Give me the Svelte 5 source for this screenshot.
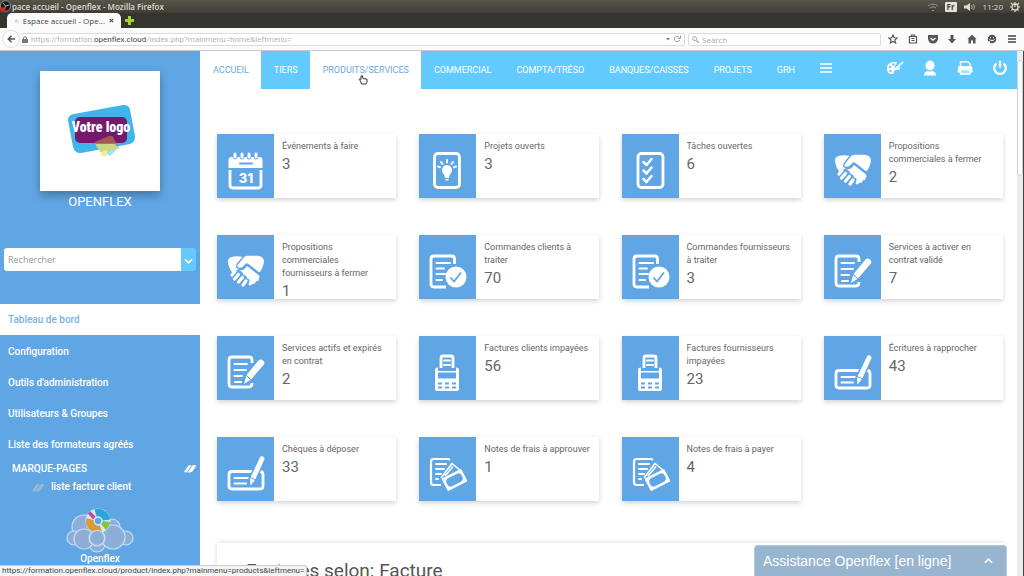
<script lang="ts">
  const navItems = [
    { label: 'ACCUEIL', state: 'current' },
    { label: 'TIERS', state: '' },
    { label: 'PRODUITS/SERVICES', state: 'hovered' },
    { label: 'COMMERCIAL', state: '' },
    { label: 'COMPTA/TRÉSO', state: '' },
    { label: 'BANQUES/CAISSES', state: '' },
    { label: 'PROJETS', state: '' },
    { label: 'GRH', state: '' },
  ];

  const menu = [
    'Tableau de bord',
    'Configuration',
    "Outils d'administration",
    'Utilisateurs & Groupes',
    'Liste des formateurs agréés',
  ];

  const cards = [
    { title: 'Événements à faire', value: 3, icon: 'calendar' },
    { title: 'Projets ouverts', value: 3, icon: 'idea' },
    { title: 'Tâches ouvertes', value: 6, icon: 'tasks' },
    { title: 'Propositions commerciales à fermer', value: 2, icon: 'handshake' },
    { title: 'Propositions commerciales fournisseurs à fermer', value: 1, icon: 'handshake' },
    { title: 'Commandes clients à traiter', value: 70, icon: 'order' },
    { title: 'Commandes fournisseurs à traiter', value: 3, icon: 'order' },
    { title: 'Services à activer en contrat validé', value: 7, icon: 'contract' },
    { title: 'Services actifs et expirés en contrat', value: 2, icon: 'contract' },
    { title: 'Factures clients impayées', value: 56, icon: 'terminal' },
    { title: 'Factures fournisseurs impayées', value: 23, icon: 'terminal' },
    { title: 'Écritures à rapprocher', value: 43, icon: 'cheque' },
    { title: 'Chèques à déposer', value: 33, icon: 'cheque' },
    { title: 'Notes de frais à approuver', value: 1, icon: 'expense' },
    { title: 'Notes de frais à payer', value: 4, icon: 'expense' },
  ];

  let active = $state('Tableau de bord');
  let search = $state('');
</script>

{#snippet tileIcon(name)}
  <svg class="tile-icon" viewBox="0 0 57 64" aria-hidden="true">
    {#if name === 'calendar'}
      <path class="solid" d="M11.500 34v-8q0-3 3-3h28q3 0 3 3v8z" />
      <path class="line" d="M13 36v15q0 3 3 3h25q3 0 3-3V36" />
      {#each [17, 24, 31, 38] as x}
        <rect class="ring" x={x - 1} y="18" width="4" height="7" rx="2" />
      {/each}
      <path class="cut" d="M23 29.500h12" />
      <text x="29" y="49" class="day">31</text>
    {:else if name === 'idea'}
      <rect class="line" x="15.500" y="19.500" width="25" height="34" rx="3.500" />
      <path class="solid" d="M28 31a5 5 0 0 1 5 5c0 3-2.500 3.500-3 8h-4c-.5-4.500-3-5-3-8a5 5 0 0 1 5-5zM26.500 45h3v1.500h-3z" />
      <path class="thin" d="M28 26v2.500M22 28l1.500 2M34 28l-1.500 2M19 32.500l2 .7M37 32.500l-2 .7" />
    {:else if name === 'tasks'}
      <rect class="line" x="16" y="19.500" width="25" height="34" rx="3.500" />
      <path class="check" d="M21.500 28l3 3 5-6M21.500 36.500l3 3 5-6M21.500 45l3 3 5-6" />
    {:else if name === 'handshake'}
      <path class="solid" d="M11 26q0-3 3.500-4 5-1.500 12 0l-5 7q-2 3 0 6-4-.5-6 3-4.500-6-4.500-12z" />
      <path class="solid" d="M22 35.500q5 .5 8-4.500l11.500 9q2 2 .2 3.500.3 3-3 2.800 0 3.200-3.700 2.700-1.500 2.500-3.500.5l1-3q.5-3-2.500-3 0-3.500-3.500-3.500-.5-3.500-4.500-4.500z" />
      <path class="palm" d="M20.500 33q-1.500-1.500-.3-3.500l6-7.500q1.500-2 4.500-2h9.500q7 .5 7.500 6-.5 7-5 12.500L31 29.500q-1.500-1-2.500.5-3 4.500-8 3z" />
      <path class="fingers" d="M18 36.500l-3 3.500M21.500 39.500l-4 4.500M25.500 42.500l-4 4.500M29 46l-3 4" />
    {:else if name === 'order'}
      <path class="line" d="M35.500 29v-5q0-3-3-3H15q-3 0-3 3v25q0 3 3 3h12" />
      <path class="thin" d="M17.500 28H31M17.500 33.500H25M17.500 39H26M17.500 45H23" />
      <circle class="solid" cx="37" cy="42" r="10.500" />
      <path class="blue-line" d="M31.500 42.500l3.500 4 7-9" />
    {:else if name === 'contract'}
      <path class="line" d="M35 27v-3q0-3-3-3H15q-3 0-3 3v24q0 3 3 3h17q3 0 3-4" />
      <path class="thin" d="M17.500 28H30M17.500 34H29M17.500 40H25M18 46h6" />
      <path class="halo" d="M41.500 24.500q2-2 4.500 0 2.500 2.500.5 4.500L34 43.500 27 48l2.500-9z" />
      <path class="solid" d="M41.500 24.500q2-2 4.500 0 2.500 2.500.5 4.500L34 43.500 27 48l2.500-9z" />
      <path class="hair" d="M28.500 38.500l6 6" />
    {:else if name === 'terminal'}
      <path class="line" d="M22 32V22q0-2 2-2h8q2 0 2 2v10" />
      <path class="thin" d="M25 24.500h6M25 29h6" />
      <path class="solid" d="M16 34q0-2.500 3-2.500V35h18v-3.500q3 0 3 2.500v19q0 2-2 2H18q-2 0-2-2z" />
      <path class="fill-blue" d="M19 36.500h18v6H19z" />
      <path class="blue-line" d="M19 47.500h4M26 47.500h4M33 47.500h4M19 51.500h4M26 51.500h4M33 51.500h4" />
    {:else if name === 'cheque'}
      <path class="line" d="M35 34.500H15q-3 0-3 3V49q0 3 3 3h28q3 0 3-3V37.500q0-3-3-3" />
      <path class="thin" d="M17.500 41H31M17.500 46.500H29" />
      <path class="halo" d="M43 20.500q1-2 3-1 2 1 1.300 3L38 43l-4.500 5.500-.5-7z" />
      <path class="solid" d="M43 20.500q1-2 3-1 2 1 1.300 3L38 43l-4.500 5.500-.5-7z" />
      <path class="hair" d="M32 40l7 3" />
    {:else}
      <path class="medium" d="M31 23q-1-1-3-1H14.500q-2.500 0-2.500 3v20q0 3 2.500 3H22" />
      <path class="thin" d="M17 27h10M17 32h8M17 37h5M17 42h2" />
      <path class="note-back" d="M22 41L33 26.500l9 7.500M26 39l8-9.500" />
      <rect class="solid" x="24.500" y="36" width="22" height="14" rx="1" transform="rotate(-27 35.500 43)" />
      <rect class="fill-blue" x="27" y="38.500" width="17" height="9" rx="4" transform="rotate(-27 35.500 43)" />
    {/if}
  </svg>
{/snippet}

{#snippet eraser()}
  <svg class="eraser" viewBox="0 0 12 9" aria-hidden="true">
    <path d="M0 8l4-6q1.500-1.500 3.500-1L3 8.500zM3.700 8.700L8 2q1-1.500 3.500-1 .8.700 0 2L8 8z" />
  </svg>
{/snippet}

<div class="desktop">
  <header class="titlebar">
    <svg class="recorder" viewBox="0 0 12 13" aria-hidden="true">
      <circle cx="5.500" cy="6" r="5.200" fill="#171717" stroke="#c8c8c8" stroke-width=".6" />
      <path d="M5.500 6L3 3M5.500 6l4-1M5.500 6l-1 4" stroke="#aaa" />
      <circle cx="3" cy="9.500" r="2.300" fill="#f21a17" />
    </svg>
    <span class="window-title">pace accueil - Openflex - Mozilla Firefox</span>
    <div class="tray">
      <svg viewBox="0 0 10 10" width="10" height="10"><path d="M0 4q5-4 10 0M2 6q3-2.500 6 0M4 8l1 1 1-1" stroke="#96948c" fill="none" /></svg>
      <span class="lang">Fr</span>
      <svg viewBox="0 0 12 10" width="12" height="10"><path d="M0 3.500h2.500L6 1v8L2.500 6.500H0z" fill="#dfdbd2" /><path d="M7.500 3q1.500 2 0 4M9.500 2q2 3 0 6" stroke="#aaa79f" fill="none" /></svg>
      <span>11:20</span>
      <svg viewBox="0 0 10 10" width="10" height="10"><circle cx="5" cy="5" r="3" fill="none" stroke="#dfdbd2" stroke-width="1.300" /><path d="M5 0v5M1 1l1.500 1.500M9 1L7.500 2.500M0 5h2M8 5h2M1.500 8.500l1-1M8.500 8.500l-1-1M5 8v2" stroke="#dfdbd2" stroke-width="1.200" /></svg>
    </div>
  </header>

  <div class="tabstrip">
    <div class="tab">
      <svg viewBox="0 0 8 8" width="8" height="8"><path d="M1 7a2 2 0 0 1 0-3 3 3 0 0 1 5-1 2 2 0 0 1 1 4z" fill="#dde5e5" /><path d="M2 3q2-2 4 0" stroke="#a7bd83" fill="none" /></svg>
      <span>Espace accueil - Ope...</span>
      <button class="plain" aria-label="Fermer l'onglet"><svg viewBox="0 0 6 6" width="5" height="5"><path d="M1 1l4 4M5 1L1 5" stroke="#555" stroke-width="1.500" /></svg></button>
    </div>
    <button class="plain" aria-label="Nouvel onglet"><svg viewBox="0 0 9 9" width="9" height="9"><path d="M3 0h3v3h3v3H6v3H3V6H0V3h3z" fill="#a6d52c" /></svg></button>
  </div>

  <div class="toolbar">
    <button class="plain back" aria-label="Précédent"><svg viewBox="0 0 8 8" width="8" height="8"><path d="M8 4H1.500M4.500.8L1.300 4l3.200 3.200" stroke="#555" stroke-width="1.600" fill="none" /></svg></button>
    <div class="address">
      <svg viewBox="0 0 6 7" width="6" height="7"><path d="M0 3h6v4H0z" fill="#777" /><path d="M1.500 3V1.500q1.500-1.500 3 0V3" stroke="#777" fill="none" /></svg>
      <span class="url">https://formation.<b>openflex.cloud</b>/index.php?mainmenu=home&amp;leftmenu=</span>
      <svg viewBox="0 0 16 8" width="16" height="8"><path d="M0 3h4L2 5.500z" fill="#777" /><path d="M13.500 2.500a2.800 2.800 0 1 0 .3 2.500M14.500.5v3h-3" stroke="#999" fill="none" /></svg>
    </div>
    <label class="websearch">
      <svg viewBox="0 0 8 8" width="7" height="7"><circle cx="3" cy="3" r="2.300" stroke="#999" fill="none" /><path d="M5 5l3 3" stroke="#999" stroke-width="1.300" /></svg>
      <input type="text" placeholder="Search" aria-label="Search" />
    </label>
    <div class="tools">
      <svg viewBox="0 0 10 10"><path d="M5 1l1.200 2.700 3 .3-2.300 2 .7 3L5 7.500 2.400 9l.7-3L.8 4l3-.3z" stroke="#555" stroke-width="1.100" fill="none" /></svg>
      <svg viewBox="0 0 10 10"><path d="M1.500 2.500h7v6.500h-7zM3.500 2.500V1h3v1.500M3.500 4.500h3M3.500 6.500h3" stroke="#555" stroke-width="1.200" fill="none" /></svg>
      <svg viewBox="0 0 10 10"><path d="M0 1h10v4q-1 4.500-5 4.500T0 5z" fill="#555" /><path d="M2.500 4L5 6.300 7.500 4" stroke="#fff" stroke-width="1.200" fill="none" /></svg>
      <svg viewBox="0 0 10 10"><path d="M3.500 1h3v4H9L5 9.500 1 5h2.500z" fill="#555" /></svg>
      <svg viewBox="0 0 10 10"><path d="M5 .8L9.500 5H8.500v4.500h-2.500V6.500H4v3H1.500V5H.5z" fill="#555" /></svg>
      <svg viewBox="0 0 10 10"><circle cx="5" cy="5" r="4.300" fill="#555" /><path d="M2 9.500l.5-2.500M2.500 5.500q2.500 2.500 5 0M3 3.500h1M6 3.500h1" stroke="#fff" fill="none" /></svg>
      <svg viewBox="0 0 10 10"><path d="M1 2h8M1 5h8M1 8h8" stroke="#444" stroke-width="1.600" /></svg>
    </div>
  </div>

  <div class="page">
    <aside>
      <div class="company-logo">
        <svg viewBox="0 0 120 120" role="img" aria-label="Votre logo">
          <path d="M34 43l49-9q6-.5 7 5l5 26q.5 6-5 8l-49 9q-6 .5-8-6l-5-27q0-5 6-6z" fill="#3fb5eb" />
          <rect x="35" y="46" width="52" height="26" rx="5" fill="#741a6c" />
          <path d="M55 71l14-6q4-1 5 3l5 9-14 7q-7-4-10-13z" fill="#b86b45" opacity=".75" />
          <path d="M55.500 73H75l4 4-14 7q-7-4-9.500-11z" fill="#c9da86" />
          <path d="M60 82l6-3 3 3-5 4z" fill="#f3ed83" />
          <path d="M66 82l13-6-9 9z" fill="#a3dff2" />
          <text x="61" y="61">Votre logo</text>
        </svg>
      </div>
      <p class="company">OPENFLEX</p>

      <form class="search">
        <input type="text" placeholder="Rechercher" aria-label="Rechercher" bind:value={search} />
        <button type="button" aria-label="Options de recherche">
          <svg viewBox="0 0 10 6" width="9" height="6"><path d="M1 1l4 4 4-4" stroke="#fff" stroke-width="1.800" fill="none" /></svg>
        </button>
      </form>

      <nav class="menu" aria-label="Menu">
        {#each menu as entry}
          <a
            href="#menu"
            class:active={entry === active}
            onclick={() => {
              active = entry;
            }}>{entry}</a
          >
        {/each}
      </nav>

      <div class="bookmarks">
        <div class="bookmarks-title"><span>MARQUE-PAGES</span>{@render eraser()}</div>
        <a href="#bookmark">{@render eraser()}<span>liste facture client</span></a>
      </div>

      <div class="brand">
        <svg viewBox="0 0 68 45" width="68" height="45" aria-hidden="true">
          <g fill="#8faed7" stroke="#c3ddf5" stroke-width="1.200">
            <circle cx="18" cy="19" r="12" /><circle cx="46" cy="19" r="8" />
            <circle cx="31" cy="36" r="8" /><circle cx="8" cy="30" r="7" />
            <circle cx="60" cy="30" r="7" /><circle cx="18" cy="31" r="10" />
            <circle cx="47" cy="29" r="12" /><circle cx="31" cy="30" r="8" />
          </g>
          <circle cx="32" cy="13" r="12.500" fill="#d6e8f7" />
          <g fill="none" stroke-width="7.500">
            <path d="M29.500 5a8.500 8.500 0 0 1 11 7" stroke="#2aa5db" />
            <path d="M40.500 13.500a8.500 8.500 0 0 1-3 5.500" stroke="#85c441" />
            <path d="M35 21a8.500 8.500 0 0 1-11-10" stroke="#d79c35" />
            <path d="M24.500 8.500l2.500-2.500" stroke="#c9419e" />
          </g>
          <circle cx="32" cy="13" r="3.800" fill="#5ca7e5" stroke="#d6e8f7" />
          <circle cx="31" cy="30" r="7.500" fill="#8faed7" stroke="#c3ddf5" stroke-width="1.200" />
        </svg>
        <span>Openflex</span>
      </div>
    </aside>

    <main>
      <nav class="topnav" aria-label="Navigation principale">
        {#each navItems as item}
          <a href="#nav" class={item.state}>
            {item.label}
            {#if item.state === 'hovered'}
              <svg class="pointer" viewBox="0 0 10 10" aria-hidden="true">
                <path d="M2.500 6L1 4.500l1-.8L3 4.500V1l1.300-.3L5 3.500l4 .7V7L8 9H3.500z" fill="#fff" stroke="#333" stroke-width="1" />
              </svg>
            {/if}
          </a>
        {/each}
        <button class="plain burger" aria-label="Plus"><svg viewBox="0 0 14 10" width="14" height="10"><path d="M1 1h12M1 5h12M1 9h12" stroke="#fff" stroke-width="1.400" /></svg></button>
        <div class="actions">
          <button class="plain" aria-label="Thème">
            <svg viewBox="0 0 18 16"><path d="M8 2Q1 2 1 8.500 1 14 6 14q2.500 0 2-2.500Q8 9.500 11 10q4 0 3-3.500L11 8.500 8.500 7l2.500-4.500Q10 2 8 2z" fill="#fff" /><path d="M9.500 7.500L16 2l1.500-.5-.5 2-6.500 5z" fill="#fff" /><circle cx="4" cy="7" r="1.200" fill="#62caff" /><circle cx="7.500" cy="4.500" r="1.200" fill="#62caff" /><circle cx="4.500" cy="11" r="1.200" fill="#62caff" /></svg>
          </button>
          <button class="plain" aria-label="Utilisateur">
            <svg viewBox="0 0 18 16"><ellipse cx="9" cy="5.500" rx="4.500" ry="5" fill="#fff" /><path d="M3 15.500q0-4 4-4.500 2 1 4 0 4 .5 4 4.500z" fill="#fff" /></svg>
          </button>
          <button class="plain" aria-label="Imprimer">
            <svg viewBox="0 0 18 16"><path d="M4.500 6V1.800h7.500L14 4v2" fill="none" stroke="#fff" stroke-width="1.500" /><path d="M2 8q0-2 2-2h10q2.500 0 2.500 2v4.500h-15z" fill="#fff" /><path d="M4.500 9.500h9.500v4.500h-9.500z" fill="#a8e0ff" stroke="#fff" stroke-width="1.400" /></svg>
          </button>
          <button class="plain" aria-label="Déconnexion">
            <svg viewBox="0 0 18 16"><path d="M5.500 3.500a5.800 5.800 0 1 0 7 0M9 .8v7" fill="none" stroke="#fff" stroke-width="2.200" /></svg>
          </button>
        </div>
      </nav>

      <section class="cards">
        {#each cards as card}
          <article class="card">
            <div class="tile">{@render tileIcon(card.icon)}</div>
            <div class="info">
              <h3>{card.title}</h3>
              <strong>{card.value}</strong>
            </div>
          </article>
        {/each}
      </section>

      <section class="panel">
        <h2>Factures selon: Facture</h2>
      </section>
    </main>

    <div class="scrollbar"><i></i></div>
  </div>

  <button class="assistance">
    <span>Assistance Openflex [en ligne]</span>
    <svg viewBox="0 0 10 6" width="9" height="6"><path d="M1 5l4-4 4 4" stroke="#fff" stroke-width="1.800" fill="none" /></svg>
  </button>
  <div class="status">https://formation.openflex.cloud/product/index.php?mainmenu=products&amp;leftmenu=</div>
</div>

<style>
  :global(body) {
    margin: 0;
  }

  .desktop {
    --blue: #60a6e5;
    --sky: #62caff;
    position: relative;
    display: flex;
    flex-direction: column;
    height: 100vh;
    overflow: hidden;
    background: #fff;
    font-family: Roboto, sans-serif;
  }

  a {
    color: inherit;
    text-decoration: none;
  }

  .plain {
    display: flex;
    align-items: center;
    justify-content: center;
    padding: 0;
    border: 0;
    background: none;
  }

  /* browser chrome */
  .titlebar,
  .tabstrip,
  .toolbar,
  .status {
    font-family: 'Open Sans', sans-serif;
    font-size: 8px;
  }

  .titlebar {
    display: flex;
    align-items: center;
    height: 13px;
    flex: none;
    background: linear-gradient(#57554a, #3f3e37);
    color: #dfdbd2;
  }

  .recorder {
    width: 12px;
    height: 13px;
  }

  .window-title {
    font-weight: 600;
  }

  .tray {
    display: flex;
    align-items: center;
    gap: 7px;
    margin-left: auto;
    padding-right: 4px;
  }

  .lang {
    padding: 0 2px;
    border-radius: 1px;
    background: #e4e1da;
    color: #444;
    font-weight: 700;
    line-height: 10px;
  }

  .tabstrip {
    display: flex;
    align-items: center;
    gap: 4px;
    height: 15px;
    flex: none;
    padding-left: 7px;
    background: #35342e;
  }

  .tab {
    display: flex;
    align-items: center;
    gap: 4px;
    box-sizing: border-box;
    width: 114px;
    height: 15px;
    padding: 0 7px;
    border-radius: 5px 5px 0 0;
    background: #fbfbfb;
    color: #444;
    white-space: nowrap;
  }

  .tab .plain {
    margin-left: auto;
  }

  .toolbar {
    display: flex;
    align-items: center;
    height: 22px;
    flex: none;
    border-bottom: 1px solid #c9c9c9;
    background: #fbfbfb;
  }

  .back {
    width: 18px;
    height: 18px;
    margin-left: 2px;
    border: 1px solid #ddd;
    border-radius: 50%;
    background: #fff;
  }

  .address,
  .websearch {
    display: flex;
    align-items: center;
    box-sizing: border-box;
    height: 13px;
    border: 1px solid #dcdcdc;
    border-radius: 2px;
    background: #fff;
  }

  .address {
    flex: 1;
    gap: 3px;
    padding: 0 2px;
    border-left: 0;
  }

  .url {
    flex: 1;
    color: #b5b5b5;
  }

  .url,
  .status {
    font-family: Roboto, sans-serif;
  }

  .url b {
    color: #444;
    font-weight: 400;
  }

  .websearch {
    flex: 0 0 193px;
    gap: 3px;
    margin-left: 3px;
    padding: 0 3px;
  }

  .websearch input {
    flex: 1;
    min-width: 0;
    padding: 0;
    border: 0;
    outline: 0;
    background: none;
    font: inherit;
  }

  .websearch input::placeholder {
    color: #aaa;
  }

  .tools {
    display: flex;
    justify-content: space-between;
    width: 129px;
    padding: 0 7px;
  }

  .tools svg {
    width: 10px;
    height: 10px;
  }

  /* page */
  .page {
    display: flex;
    flex: 1;
    min-height: 0;
  }

  aside {
    display: flex;
    flex-direction: column;
    box-sizing: border-box;
    width: 200px;
    flex: none;
    padding-top: 20px;
    background: var(--blue);
    color: #fff;
    font-size: 10px;
  }

  .company-logo {
    width: 120px;
    height: 120px;
    flex: none;
    align-self: center;
    background: #fff;
    box-shadow: 0 4px 9px rgba(0, 0, 0, 0.3);
  }

  .company-logo text {
    fill: #fff;
    font: 900 14px 'Liberation Sans Narrow', 'Roboto Condensed', Roboto, sans-serif;
    text-anchor: middle;
  }

  .company {
    margin: 3px 0 0;
    font-size: 13px;
    line-height: 16px;
    text-align: center;
  }

  .search {
    display: flex;
    height: 23px;
    flex: none;
    margin: 38px 4px 33px;
    border-radius: 3px;
    overflow: hidden;
  }

  .search input {
    flex: 1;
    min-width: 0;
    padding: 0 4px;
    border: 0;
    outline: 0;
    background: #fff;
    color: #555;
    font: 9px 'Open Sans', sans-serif;
  }

  .search input::placeholder {
    color: #999;
  }

  .search button {
    width: 15px;
    padding: 0;
    border: 0;
    background: var(--sky);
  }

  .menu {
    display: flex;
    flex-direction: column;
    font-weight: 500;
  }

  .menu a {
    padding: 0 8px;
    line-height: 31px;
  }

  .menu a.active {
    margin-bottom: 1px;
    background: #fff;
    color: #7ab2e4;
  }

  .bookmarks {
    font-weight: 500;
  }

  .bookmarks-title {
    display: flex;
    align-items: center;
    justify-content: space-between;
    padding: 0 4px 0 12px;
    line-height: 17px;
  }

  .bookmarks a {
    display: flex;
    align-items: center;
    gap: 7px;
    padding-left: 32px;
    line-height: 20px;
  }

  .eraser {
    width: 12px;
    height: 9px;
    fill: #fff;
  }

  .bookmarks a .eraser {
    fill: #9db7d4;
  }

  .brand {
    display: flex;
    flex-direction: column;
    align-items: center;
    padding-top: 11px;
    font-weight: 500;
    line-height: 12px;
  }

  main {
    flex: 1;
    min-width: 0;
  }

  .topnav {
    display: flex;
    height: 38px;
    background: var(--sky);
    color: #fff;
    font-size: 9px;
  }

  .topnav a {
    position: relative;
    padding: 0 12px 0 13px;
    line-height: 38px;
    white-space: nowrap;
  }

  .topnav .current,
  .topnav .hovered {
    background: #fff;
    color: #6aa9df;
  }

  .pointer {
    position: absolute;
    left: 48px;
    top: 24px;
    width: 10px;
    height: 10px;
  }

  .burger {
    height: 34px;
    margin-left: 12px;
  }

  .actions {
    display: flex;
    align-items: center;
    gap: 17px;
    height: 34px;
    margin-left: auto;
    padding-right: 8px;
  }

  .actions svg {
    width: 18px;
    height: 16px;
  }

  .cards {
    display: grid;
    grid-template-columns: repeat(4, 1fr);
    gap: 37px 23px;
    padding: 45px 14px 0 17px;
  }

  .card {
    display: flex;
    height: 64px;
    background: #fff;
    box-shadow: 0 2px 5px rgba(0, 0, 0, 0.18);
  }

  .tile {
    width: 57px;
    flex: none;
    background: var(--blue);
  }

  .tile-icon {
    display: block;
    width: 57px;
    height: 64px;
    fill: none;
    stroke: #fff;
    stroke-linejoin: round;
  }

  .solid {
    fill: #fff;
    stroke: none;
  }

  .line {
    stroke-width: 2.8;
  }

  .medium {
    stroke-width: 2.2;
  }

  .thin {
    stroke-width: 2;
    stroke-linecap: round;
  }

  .check {
    stroke-width: 2.5;
    stroke-linecap: round;
  }

  .palm {
    fill: #fff;
    stroke: var(--blue);
    stroke-width: 1.4;
  }

  .fingers {
    stroke-width: 3.2;
    stroke-linecap: round;
  }

  .ring {
    fill: #fff;
    stroke: var(--blue);
    stroke-width: 1;
  }

  .cut {
    stroke: var(--blue);
    stroke-width: 2;
    stroke-linecap: round;
  }

  .blue-line {
    stroke: var(--blue);
    stroke-width: 1.8;
  }

  .hair {
    stroke: var(--blue);
    stroke-width: 1;
  }

  .halo {
    stroke: var(--blue);
    stroke-width: 3;
  }

  .fill-blue {
    fill: var(--blue);
    stroke: none;
  }

  .note-back {
    stroke-width: 1.6;
  }

  .day {
    fill: #fff;
    stroke: none;
    font: 800 13px Inter, sans-serif;
    text-anchor: middle;
  }

  .info {
    min-width: 0;
    padding: 6px 8px 0;
    color: #666;
  }

  .info h3 {
    margin: 0;
    font-size: 9px;
    font-weight: 400;
    line-height: 13px;
  }

  .info strong {
    display: block;
    font-size: 15px;
    font-weight: 400;
    line-height: 22px;
  }

  .panel {
    margin: 42px 14px 0 17px;
    padding: 15px 29px;
    background: #fff;
    box-shadow: 0 0 5px rgba(0, 0, 0, 0.16);
  }

  .panel h2 {
    margin: 0;
    color: #555;
    font-size: 19px;
    font-weight: 400;
    line-height: 26px;
  }

  .scrollbar {
    width: 6px;
    flex: none;
    border-right: 1px solid #444;
    background: #eeeded;
  }

  .scrollbar i {
    display: block;
    height: 114px;
    margin-top: 9px;
    border: 1px solid #d0d0d0;
    border-radius: 3px;
    background: #fff;
  }

  .assistance {
    position: absolute;
    right: 17px;
    bottom: 0;
    display: flex;
    align-items: center;
    justify-content: space-between;
    width: 253px;
    height: 31px;
    padding: 0 13px 0 8px;
    border: 1px solid #b4cadd;
    border-bottom: 0;
    border-radius: 4px 4px 0 0;
    background: #98b5d0;
    color: #fff;
    font: 14px 'Liberation Sans', sans-serif;
  }

  .status {
    position: absolute;
    left: 0;
    bottom: 0;
    padding: 0 2px;
    border-top: 1px solid #ccc;
    border-right: 1px solid #ccc;
    border-radius: 0 3px 0 0;
    background: #f4f4f4;
    color: #444;
    line-height: 10px;
  }
</style>
